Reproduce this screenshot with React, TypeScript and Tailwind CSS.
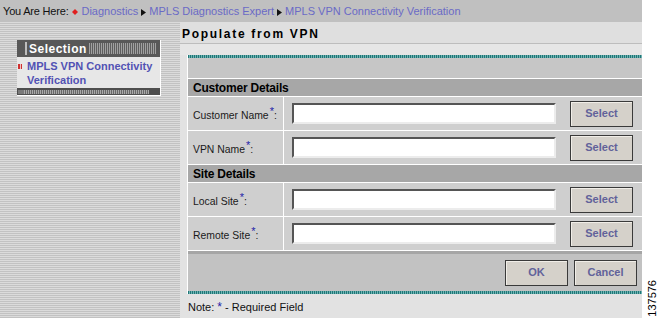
import React from "react";

const font = "font-['Liberation_Sans',Arial,sans-serif]";

const Crumb = () => (
  <svg width="5" height="7" viewBox="0 0 5 7" className="mx-[3px] mt-[1px]">
    <path d="M0 0 L5 3.5 L0 7 Z" fill="#111" />
  </svg>
);

const Button = ({ label }: { label: string }) => (
  <div className="w-[63px] h-[26px] flex items-center justify-center border border-[#3a3a3a] bg-[#d5d1ca] shadow-[inset_1px_1px_0_#f1eee8] text-[11px] font-bold text-[#62629a]">
    {label}
  </div>
);

const FieldRow = ({ label }: { label: string }) => (
  <div className="flex h-[34px] border-b border-white bg-[#cfcfcf]">
    <div className="w-[96px] border-r border-white flex items-center pl-[5px] pt-[5px] text-[10.4px] text-[#1a1a1a]">
      {label}
      <sup className="text-[11px] text-[#2323a8] ml-[1px]">*</sup>:
    </div>
    <div className="flex-1 flex items-center pl-[8px]">
      <div className="w-[264px] h-[21px] bg-white border-2 border-t-[#555] border-l-[#555] border-b-[#ececec] border-r-[#ececec]" />
      <div className="ml-[14px]">
        <Button label="Select" />
      </div>
    </div>
  </div>
);

const Header = ({ title }: { title: string }) => (
  <div className="h-[18px] border-b border-white bg-[#a7a7a7] flex items-center pl-[5px] text-[12px] font-bold tracking-[-0.2px] text-black">
    {title}
  </div>
);

const Teal = () => (
  <div className="h-[3px] bg-[repeating-linear-gradient(90deg,#1f7676_0px,#1f7676_1px,#6fb3b3_1px,#6fb3b3_2px)]" />
);

export default function App() {
  return (
    <div className={`w-[662px] h-[318px] flex bg-white overflow-hidden ${font}`}>
      <div className="w-[642px] flex flex-col">
        {/* breadcrumb */}
        <div className="h-[22px] shrink-0 bg-[#c0c0c0] flex items-center pl-[3px] pt-[1px] text-[11px]">
          <span className="text-[#111] tracking-[-0.2px]">You Are Here:</span>
          <svg width="6" height="6" viewBox="0 0 6 6" className="ml-[4px] mr-[3px]">
            <path d="M3 0 L6 3 L3 6 L0 3 Z" fill="#e02020" />
          </svg>
          <span className="text-[#6a6ac6]">Diagnostics</span>
          <Crumb />
          <span className="text-[#6a6ac6]">MPLS Diagnostics Expert</span>
          <Crumb />
          <span className="text-[#6a6ac6]">MPLS VPN Connectivity Verification</span>
        </div>

        <div className="flex flex-1">
          {/* left column */}
          <div className="w-[180px] pt-[18px] pl-[17px] bg-[repeating-linear-gradient(180deg,#dbdbdb_0px,#dbdbdb_1px,#c2c2c2_1px,#c2c2c2_2px)]">
            <div className="w-[144px] border-r border-b border-white">
              <div className="h-[17px] bg-[#585858] flex items-stretch">
                <div className="w-[8px]" />
                <div className="w-[2px] my-[2px] bg-[#bdbdbd]" />
                <div className="pl-[2px] pr-[2px] flex items-center text-[12px] font-bold tracking-[0.5px] text-white">
                  Selection
                </div>
                <div className="flex-1 my-[3px] mr-[4px] bg-[repeating-linear-gradient(90deg,#a0a0a0_0px,#a0a0a0_1px,#5e5e5e_1px,#5e5e5e_2px)]" />
              </div>
              <div className="bg-[#e7e7e7] h-[31px] flex pt-[2px]">
                <div className="w-[10px] pt-[5px] pl-[1px]">
                  <div className="w-[4px] h-[5px] bg-[#d03030] border-x border-[#d03030] flex justify-center">
                    <div className="w-[1px] h-full bg-[#f0c0c0]" />
                  </div>
                </div>
                <div className="text-[11px] font-bold leading-[14px] text-[#5252b4]">
                  MPLS VPN Connectivity
                  <br />
                  Verification
                </div>
              </div>
              <div className="h-[7px] bg-[#4e4e4e] flex items-center pl-[1px]">
                <div className="w-[6px] h-[4px] bg-[#7a7a7a]" />
                <div className="w-[125px] h-[4px] bg-[repeating-linear-gradient(90deg,#a8a8a8_0px,#a8a8a8_1px,#686868_1px,#686868_2px)]" />
              </div>
            </div>
          </div>

          {/* right column */}
          <div className="flex-1 flex flex-col bg-[#e2e2e2]">
            <div className="h-[22px] border-b border-[#bdbdbd] bg-[#dfdfdf] pl-[2px] pt-[3px] text-[12px] font-bold tracking-[1.7px] text-black">
              Populate from VPN
            </div>
            <div className="h-[11px] bg-[#e6e6e6]" />
            <div className="ml-[7px] border-l border-white flex flex-col">
              <Teal />
              <div className="h-[21px] border-b border-white bg-[#c6c6c6]" />
              <Header title="Customer Details" />
              <FieldRow label="Customer Name" />
              <FieldRow label="VPN Name" />
              <Header title="Site Details" />
              <FieldRow label="Local Site" />
              <FieldRow label="Remote Site" />
              <div className="h-[3px] bg-[#a6a6a6]" />
              <div className="h-[37px] bg-[#c2c2c2] flex items-center justify-end gap-[6px] pr-[5px]">
                <Button label="OK" />
                <Button label="Cancel" />
              </div>
              <Teal />
            </div>
            <div className="pl-[8px] pt-[4px] text-[11px] text-[#111]">
              Note: <span className="text-[#2323a8] text-[12px]">*</span> - Required Field
            </div>
          </div>
        </div>
      </div>

      {/* figure number */}
      <div className="flex-1 flex flex-col justify-end items-start pl-[4px] pb-[1px]">
        <div className="[writing-mode:vertical-rl] rotate-180 text-[11px] leading-[12px] text-black">137576</div>
      </div>
    </div>
  );
}
